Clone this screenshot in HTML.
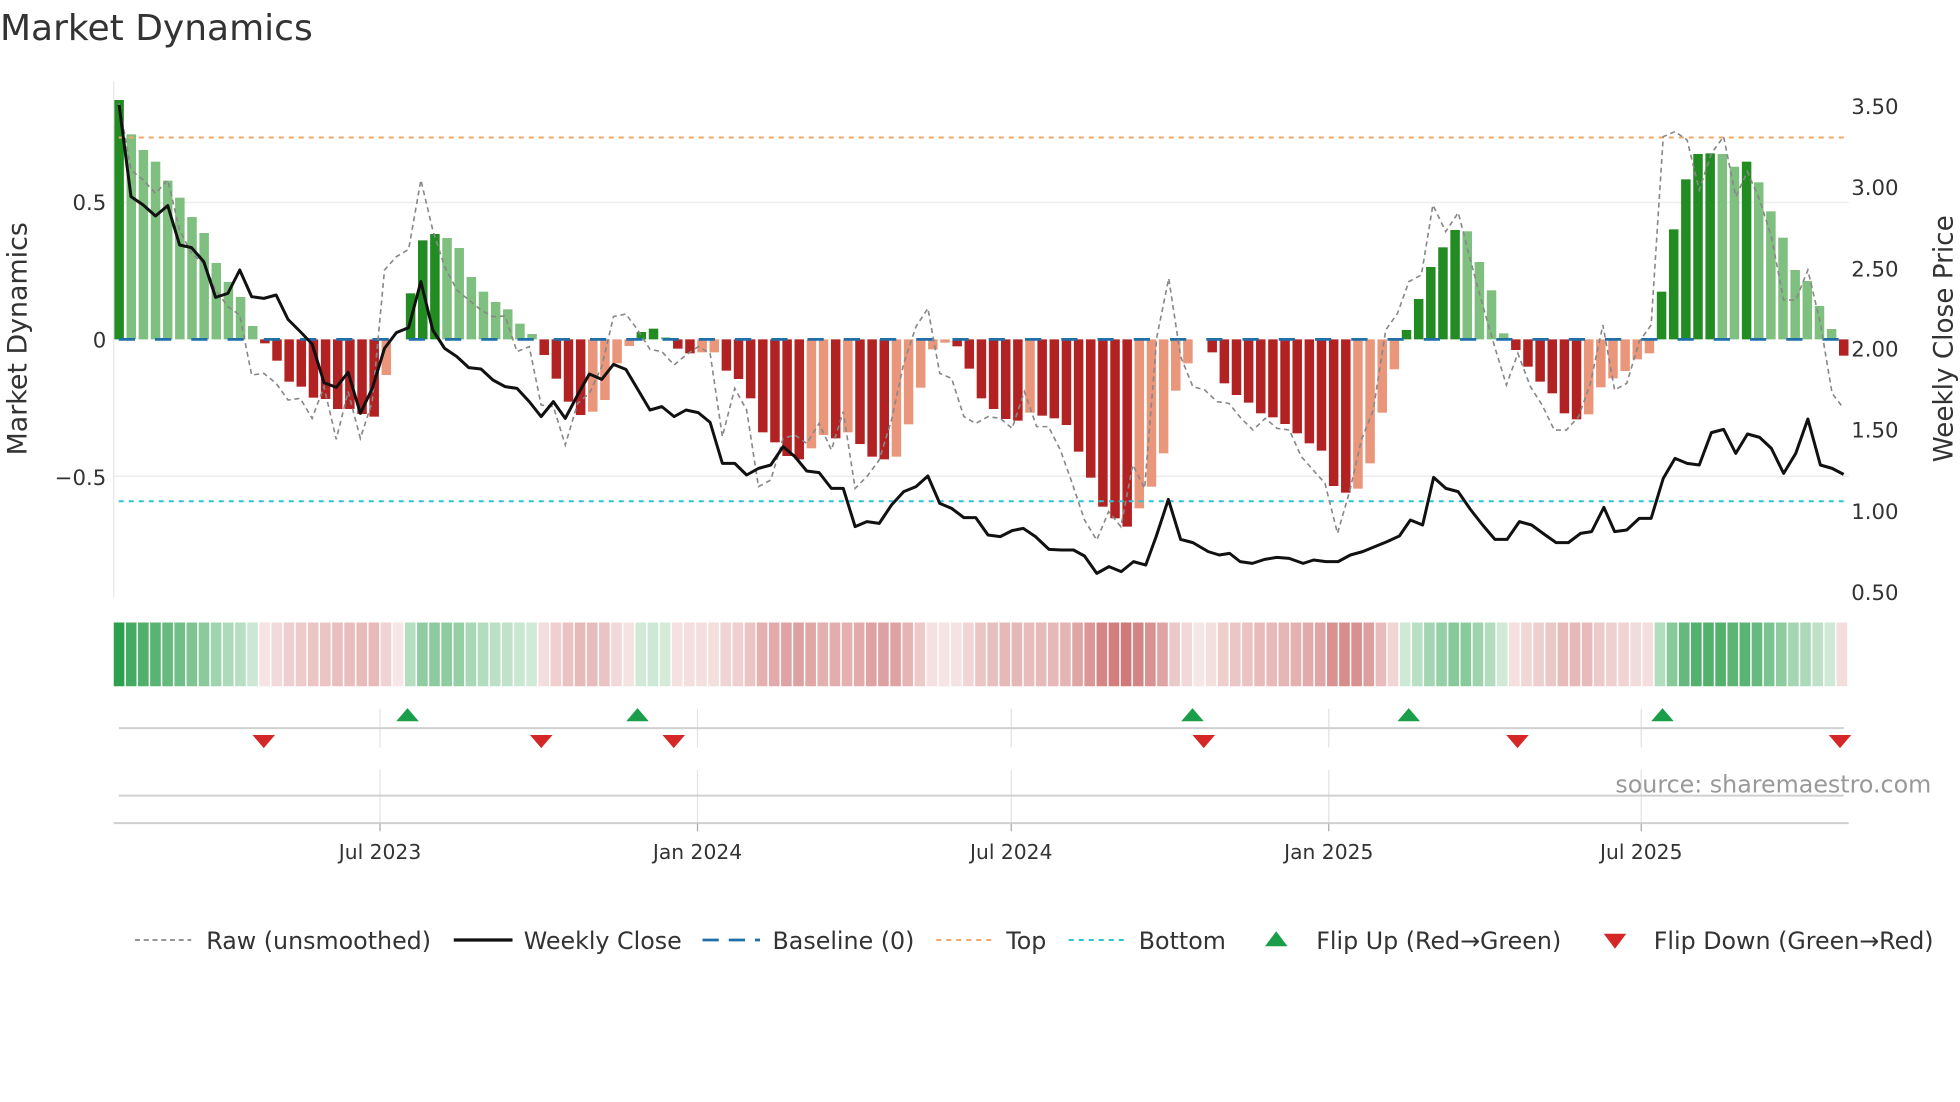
<!DOCTYPE html>
<html><head><meta charset="utf-8"><style>
html,body{margin:0;padding:0;background:#fff;}
svg{display:block;}
text{font-family:"DejaVu Sans","Liberation Sans",sans-serif;}
</style></head><body>
<svg id="s" xmlns="http://www.w3.org/2000/svg" width="1960" height="1102" viewBox="0 0 1568 881.6">
<rect width="1568" height="881.6" fill="#fff"/>
<text x="0" y="32" font-size="28.8" fill="#333">Market Dynamics</text>
<line x1="91" y1="65" x2="91" y2="478" stroke="#e6e6e6" stroke-width="1"/>
<line x1="91" y1="162" x2="1479" y2="162" stroke="#ececec" stroke-width="1.2"/>
<line x1="91" y1="381" x2="1479" y2="381" stroke="#ececec" stroke-width="1.2"/>
<g id="bars"></g>
<line x1="95" y1="271.5" x2="1475" y2="271.5" stroke="#1f6fa8" stroke-width="2.2" stroke-dasharray="13,16"/>
<line x1="95" y1="110" x2="1475" y2="110" stroke="#f0a86a" stroke-width="1.6" stroke-dasharray="4,4"/>
<line x1="95" y1="401" x2="1475" y2="401" stroke="#2ec4d6" stroke-width="1.6" stroke-dasharray="4,4"/>
<polyline id="raw" fill="none" stroke="#888" stroke-width="1.3" stroke-dasharray="4,3"/>
<polyline id="close" fill="none" stroke="#111" stroke-width="2.4" stroke-linejoin="round"/>
<g font-size="17" fill="#333">
<text x="85" y="168" text-anchor="end">0.5</text>
<text x="85" y="278" text-anchor="end">0</text>
<text x="85" y="388" text-anchor="end">−0.5</text>
<text x="1481" y="91">3.50</text>
<text x="1481" y="156">3.00</text>
<text x="1481" y="221">2.50</text>
<text x="1481" y="285">2.00</text>
<text x="1481" y="350">1.50</text>
<text x="1481" y="415">1.00</text>
<text x="1481" y="480">0.50</text>
</g>
<text transform="translate(21,271) rotate(-90)" text-anchor="middle" font-size="21.5" fill="#333">Market Dynamics</text>
<text transform="translate(1562,271) rotate(-90)" text-anchor="middle" font-size="21" fill="#333">Weekly Close Price</text>
<g id="heat"></g>
<g stroke="#e3e3e3" stroke-width="1">
<line x1="304" y1="567" x2="304" y2="598"/><line x1="558" y1="567" x2="558" y2="598"/><line x1="809" y1="567" x2="809" y2="598"/><line x1="1063" y1="567" x2="1063" y2="598"/><line x1="1313" y1="567" x2="1313" y2="598"/>
<line x1="304" y1="616" x2="304" y2="658"/><line x1="558" y1="616" x2="558" y2="658"/><line x1="809" y1="616" x2="809" y2="658"/><line x1="1063" y1="616" x2="1063" y2="658"/><line x1="1313" y1="616" x2="1313" y2="658"/>
</g>
<line x1="95" y1="582.5" x2="1475" y2="582.5" stroke="#d0d0d0" stroke-width="1.6"/>
<line x1="95" y1="636.5" x2="1475" y2="636.5" stroke="#d0d0d0" stroke-width="1.6"/>
<line x1="91" y1="658.5" x2="1479" y2="658.5" stroke="#cfcfcf" stroke-width="1.6"/>
<g stroke="#aaa" stroke-width="1"><line x1="304" y1="659" x2="304" y2="665"/><line x1="558" y1="659" x2="558" y2="665"/><line x1="809" y1="659" x2="809" y2="665"/><line x1="1063" y1="659" x2="1063" y2="665"/><line x1="1313" y1="659" x2="1313" y2="665"/></g>
<g id="marks"></g>
<text x="1545" y="634" text-anchor="end" font-size="19" fill="#999">source: sharemaestro.com</text>
<g font-size="16.2" fill="#333" text-anchor="middle">
<text x="304" y="687">Jul 2023</text><text x="558" y="687">Jan 2024</text><text x="809" y="687">Jul 2024</text><text x="1063" y="687">Jan 2025</text><text x="1313" y="687">Jul 2025</text>
</g>
<g font-size="19" fill="#333">
<line x1="108" y1="752" x2="153" y2="752" stroke="#888" stroke-width="1.4" stroke-dasharray="4,3"/>
<text x="165" y="759">Raw (unsmoothed)</text>
<line x1="363" y1="752" x2="410" y2="752" stroke="#111" stroke-width="2.6"/>
<text x="419" y="759">Weekly Close</text>
<line x1="562" y1="752" x2="608" y2="752" stroke="#1f6fa8" stroke-width="2.2" stroke-dasharray="13,8"/>
<text x="618" y="759">Baseline (0)</text>
<line x1="749" y1="752" x2="794" y2="752" stroke="#f0a86a" stroke-width="1.6" stroke-dasharray="4,4"/>
<text x="805" y="759">Top</text>
<line x1="855" y1="752" x2="900" y2="752" stroke="#2ec4d6" stroke-width="1.6" stroke-dasharray="4,4"/>
<text x="911" y="759">Bottom</text>
<polygon points="1012,757 1030,757 1021,745" fill="#1a9e4a"/>
<text x="1053" y="759">Flip Up (Red→Green)</text>
<polygon points="1283,747 1301,747 1292,759" fill="#d62728"/>
<text x="1323" y="759">Flip Down (Green→Red)</text>
</g>
</svg>
<script>
var NS="http://www.w3.org/2000/svg";
var B=[[30,'G'],[133,'g'],[180,'g'],[215,'g'],[272,'g'],[323,'g'],[381,'g'],[429,'g'],[519,'g'],[576,'g'],[621,'g'],[708,'g'],
[760,'R'],[812,'R'],[875,'R'],[890,'R'],[923,'R'],[927,'R'],[957,'R'],[957,'R'],[972,'R'],[980,'R'],[855,'s'],[748,'s'],
[610,'G'],[451,'G'],[432,'G'],[444,'g'],[474,'g'],[561,'g'],[605,'g'],[636,'g'],[658,'g'],[701,'g'],[732,'g'],
[795,'R'],[866,'R'],[935,'R'],[975,'R'],[965,'s'],[930,'s'],[820,'s'],[768,'s'],[726,'G'],[716,'G'],[742,'g'],
[776,'R'],[790,'R'],[787,'s'],[787,'s'],[842,'R'],
[867,'R'],[925,'R'],[1027,'R'],[1057,'R'],[1098,'R'],[1108,'R'],[1075,'s'],[1035,'s'],[1045,'R'],[1027,'s'],[1062,'R'],[1100,'R'],[1108,'R'],[1100,'s'],[1003,'s'],[893,'s'],[778,'s'],[758,'s'],
[769,'R'],[836,'R'],[925,'R'],[957,'R'],[987,'R'],[992,'R'],[968,'s'],[977,'R'],[985,'R'],[1005,'R'],[1085,'R'],[1163,'R'],[1250,'R'],[1285,'R'],[1310,'R'],[1255,'s'],[1190,'s'],[1090,'s'],[902,'s'],[820,'s'],[748,'s'],
[787,'R'],[880,'R'],[915,'R'],[938,'R'],[970,'R'],[982,'R'],[1002,'R'],[1030,'R'],[1060,'R'],[1082,'R'],[1188,'R'],[1208,'R'],[1196,'s'],[1120,'s'],[968,'s'],[838,'s'],
[720,'G'],[627,'G'],[531,'G'],[472,'G'],[420,'G'],[424,'g'],[516,'g'],[601,'g'],[730,'g'],
[780,'R'],[830,'R'],[875,'R'],[910,'R'],[970,'R'],[988,'R'],[973,'s'],[892,'s'],[865,'s'],[843,'s'],[808,'s'],[790,'s'],
[605,'G'],[418,'G'],[268,'G'],[192,'G'],[190,'G'],[192,'g'],[230,'g'],[215,'G'],[277,'g'],[364,'g'],[443,'g'],[540,'g'],[573,'g'],[648,'g'],[717,'g'],[797,'R']];
var COL={G:'#228b22',g:'#7fbf7f',R:'#b22222',s:'#e9967a'};
var n=B.length, pitch=(1475-95.3)/(n-1);
var bars=document.getElementById('bars'), heat=document.getElementById('heat');
function mix(c,t){return 'rgb('+Math.round(255+(c[0]-255)*t)+','+Math.round(255+(c[1]-255)*t)+','+Math.round(255+(c[2]-255)*t)+')';}
var hp=(1479-91)/n;
for(var i=0;i<n;i++){
 var y=72+B[i][0]/3.75, x=95.3+i*pitch, z=271.5;
 var r=document.createElementNS(NS,'rect');
 r.setAttribute('x',x-3.8);r.setAttribute('width',7.6);
 r.setAttribute('y',Math.min(y,z));r.setAttribute('height',Math.max(Math.abs(y-z),0.01));
 r.setAttribute('fill',COL[B[i][1]]);bars.appendChild(r);
 var v=(z-y)/220, h=document.createElementNS(NS,'rect'), c;
 if(B[i][1]=='G'||B[i][1]=='g'){c=mix([45,160,78],Math.min(1,0.2+0.8*v/0.87));}
 else{c=mix([205,110,110],Math.min(1,0.17+0.75*(-v)/0.68));}
 h.setAttribute('x',91+i*hp);h.setAttribute('width',hp-1.2);h.setAttribute('y',498);h.setAttribute('height',51);h.setAttribute('fill',c);heat.appendChild(h);
}
function conv(arr,x0,sx,y0,sy){return arr.map(function(p){return (x0+p[0]/sx).toFixed(1)+','+(y0+p[1]/sy).toFixed(1);});}
var c3=[[23,45],[53,320],[84,345],[115,378],[146,347],[176,465],[206,473],[237,515],[267,622],[298,610],[328,540],[358,620],[389,625],[420,615],[450,688],[481,725],[511,762],[541,878],[572,892],[602,847],[633,970],[663,895],[694,775],[724,728],[755,713],[786,575],[816,720],[846,775],[877,800],[907,833],[938,837],[968,870],[999,890],[1029,895],[1060,935],[1090,980],[1121,935],[1151,985],[1182,915],[1212,852],[1243,868],[1273,823],[1304,838],[1334,898],[1365,960],[1395,950],[1426,980],[1456,960],[1487,968],[1517,997],[1548,1120]];
var c4=[[88,1120],[118,1155],[148,1135],[179,1125],[210,1070],[240,1100],[270,1143],[301,1148],[332,1195],[362,1195],[392,1310],[422,1295],[453,1300],[484,1245],[515,1205],[546,1190],[576,1158],[606,1240],[636,1255],[667,1283],[697,1283],[728,1335],[759,1340],[789,1322]];
var c2=[[38,1345],[58,1370],[80,1408],[100,1410],[120,1410],[138,1428],[158,1480],[178,1460],[198,1475],[218,1445],[238,1455],[255,1370],[275,1258],[295,1378],[315,1388],[340,1415],[358,1425],[375,1420],[392,1445],[412,1450],[432,1438],[452,1432],[472,1435],[495,1450],[512,1440],[532,1445],[552,1445],[572,1425],[592,1415],[612,1400],[632,1385],[652,1368],[670,1320],[690,1335],[708,1192],[728,1225],[748,1235],[768,1288],[788,1335],[808,1378],[828,1378],[848,1325],[868,1335],[888,1362],[908,1388],[928,1388],[948,1360],[966,1355],[986,1282]];
var c5=[[881,1325],[915,1320],[950,1285],[983,1285],[1017,1165],[1050,1105],[1084,1120],[1118,1125],[1152,1028],[1186,1018],[1220,1090],[1253,1032],[1287,1042],[1320,1075],[1354,1150],[1388,1090],[1422,987],[1457,1125],[1490,1135],[1522,1153]];
var cl=[].concat(conv(c3,88,3.16,72,3.75),conv(c4,560,3.16,72,3.75),conv(c2,800,2.041,64,3.75),conv(c5,1040,3.5,72,3.75));
document.getElementById('close').setAttribute('points',cl.join(' '));
var r3=[[23,40],[53,240],[84,270],[115,310],[146,270],[176,420],[206,490],[237,520],[267,600],[298,650],[328,675],[358,855],[389,850],[420,880],[450,930],[481,925],[511,985],[541,890],[572,1048],[602,905],[633,1045],[663,935],[694,540],[724,500],[755,478],[786,270],[816,420],[846,530],[877,600],[907,630],[938,660],[968,680],[999,678],[1029,785],[1060,770],[1090,945],[1121,950],[1151,1065],[1182,940],[1212,910],[1243,830],[1273,680],[1304,672],[1334,720],[1365,778],[1395,785],[1426,825],[1456,795],[1487,770],[1517,790],[1548,1040]];
var r4=[[88,895],[118,960],[148,1190],[179,1170],[210,1045],[240,1035],[270,1060],[301,1000],[332,1080],[362,965],[392,1195],[422,1160],[453,1110],[484,990],[515,820],[546,710],[576,655],[606,850],[636,865],[667,980],[697,1000],[728,980],[759,985],[789,1015],[820,905],[851,1010],[881,1010],[911,1080],[941,1180],[972,1290],[1003,1350],[1033,1265],[1064,1310],[1094,1125],[1124,1195],[1155,740],[1185,565],[1215,800],[1246,890],[1276,900],[1307,935],[1337,940],[1368,985],[1398,1020],[1429,985],[1459,1015],[1490,1020],[1520,1100]];
var r5=[[70,1180],[105,1330],[140,1200],[172,1050],[205,960],[240,720],[273,670],[305,575],[340,555],[372,345],[408,425],[443,368],[477,510],[510,640],[545,770],[578,885],[610,790],[645,890],[678,945],[712,1020],[746,1020],[780,980],[813,880],[848,705],[881,900],[915,880],[950,755],[983,705],[1017,140],[1050,125],[1084,150],[1118,300],[1152,190],[1186,140],[1220,320],[1253,245],[1287,330],[1320,440],[1354,630],[1388,630],[1422,540],[1457,700],[1490,910],[1522,955]];
var rl=[].concat(conv(r3,88,3.16,72,3.75),conv(r4,560,3.16,72,3.75),conv(r5,1040,3.5,72,3.75));
document.getElementById('raw').setAttribute('points',rl.join(' '));
var mk=document.getElementById('marks');
[326,510,954,1127,1330].forEach(function(x){var p=document.createElementNS(NS,'polygon');p.setAttribute('points',(x-9)+',577 '+(x+9)+',577 '+x+',566.5');p.setAttribute('fill','#1a9e4a');mk.appendChild(p);});
[211,433,539,963,1214,1472].forEach(function(x){var p=document.createElementNS(NS,'polygon');p.setAttribute('points',(x-9)+',588 '+(x+9)+',588 '+x+',598.5');p.setAttribute('fill','#d62728');mk.appendChild(p);});
</script>
</body></html>
